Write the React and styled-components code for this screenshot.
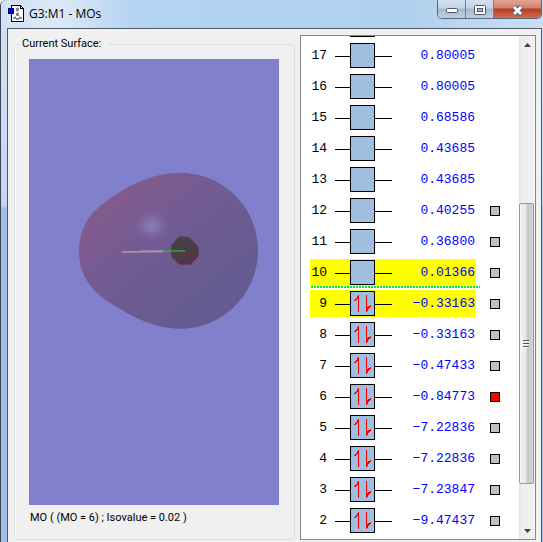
import styled, { createGlobalStyle } from "styled-components";
import { useState } from "react";

const GlobalStyle = createGlobalStyle`
  * {
    box-sizing: border-box;
  }

  body {
    margin: 0;
    overflow: hidden;
    background: #f0f0f0;
    color: #000;
    font-family: Roboto, "Liberation Sans", sans-serif;
    font-size: 11px;
  }
`;

const Window = styled.div`
  height: 100vh;
  display: flex;
  flex-direction: column;
  padding: 0 1px 0 6px;
  border-left: 1px solid #3a4552;
  border-top-left-radius: 6px;
  background: linear-gradient(#d3e3f4, #c3d8ef 206px, #9fc0e8 208px, #9fc0e8);
`;

const TitleBar = styled.header`
  height: 28px;
  flex-shrink: 0;
  display: flex;
  align-items: flex-start;
  margin: 0 -1px 0 -6px;
  padding-left: 7px;
  border-top-left-radius: 6px;
  background: linear-gradient(
    to right,
    #d0e2f4,
    #dce9f6 60px,
    #b5d4f1 130px,
    #b0d0ee 75%,
    #cadef2
  );
`;

const Title = styled.h1`
  flex: 1;
  margin: 0;
  padding: 5px 0 0 4px;
  font-family: "Open Sans", sans-serif;
  font-size: 12px;
  font-weight: 400;
  line-height: 18px;
`;

const AppIcon = styled.svg`
  margin-top: 5px;
`;

const WindowButtons = styled.div`
  display: flex;
  margin-right: 1px;
  border: 1px solid #56687c;
  border-top: 0;
  border-radius: 0 0 5px 5px;
  overflow: hidden;
`;

const WindowButton = styled.button`
  width: ${(props) => (props.$close ? 47 : 28)}px;
  height: 18px;
  display: flex;
  align-items: center;
  justify-content: center;
  padding: 0;
  border: 0;
  border-right: ${(props) => (props.$close ? "0" : "1px solid #6d7f93")};
  background: ${(props) =>
    props.$close
      ? "linear-gradient(#e3a394, #d4806f 8px, #b93a22 9px, #cf6f50)"
      : "linear-gradient(#d4e0ec, #c3d2e2 8px, #a5b9ce 9px, #bdcfe2)"};

  svg {
    margin-top: 2px;
  }
`;

const Content = styled.main`
  flex: 1;
  min-height: 0;
  display: flex;
  gap: 5px;
  padding: 6px 5px 2px 6px;
  border: 1px solid #4d5a69;
  border-bottom: 0;
  background: #f0f0f0;
`;

const Surface = styled.fieldset`
  flex: 1;
  min-width: 0;
  display: flex;
  flex-direction: column;
  margin: 0;
  padding: 6px 15px 13px 14px;
  border: 1px solid #d5dfe5;
  border-radius: 3px;
  box-shadow: inset 1px 0 #fff;
`;

const Legend = styled.legend`
  margin-left: -8px;
  padding: 0 8px 0 1px;
  line-height: 18px;
`;

const Viewport = styled.div`
  flex: 1;
  min-height: 0;
  background: #8080cc;

  svg {
    display: block;
    width: 100%;
    height: 100%;
  }
`;

const Caption = styled.p`
  margin: 0;
  padding: 5px 0 0 1px;
  line-height: 16px;
`;

const Levels = styled.section`
  width: 236px;
  display: flex;
  border: 1px solid #828790;
  background: #fff;
`;

const LevelsView = styled.div`
  flex: 1;
  min-width: 0;
  display: flex;
  flex-direction: column;
  justify-content: flex-end;
  padding: 0 0 3px 9px;
  overflow: hidden;
`;

const Table = styled.table`
  width: 190px;
  border-spacing: 0;
  font-family: "Liberation Mono", "Courier New", monospace;
  font-size: 13px;
  line-height: 15px;
`;

const Cell = styled.td`
  position: relative;
  height: 31px;
  padding: 0;
  border: solid transparent;
  border-width: 2px 0;
  background: ${(props) => (props.$marked ? "#ff0" : "transparent")};
  background-clip: padding-box;
`;

const IdCell = styled(Cell)`
  width: 25px;
  padding-right: 8px;
  text-align: right;
`;

const DiagramCell = styled(Cell)`
  width: 57px;

  svg {
    display: block;
  }
`;

const EnergyCell = styled(Cell)`
  width: 84px;
  padding-right: 1px;
  text-align: right;
  color: #00f;
`;

const CheckCell = styled(Cell)`
  text-align: right;
`;

// dotted line between the empty and the filled levels
const Gap = styled.span`
  position: absolute;
  left: 1px;
  bottom: -2px;
  z-index: 1;
  width: 169px;
  height: 2px;
  background: repeating-linear-gradient(
    to right,
    #00f020 0 2px,
    transparent 2px 3px
  );
`;

const Check = styled.input`
  appearance: none;
  display: block;
  width: 10px;
  height: 10px;
  margin: 0 0 0 auto;
  border: 1px solid #000;
  background: #c0c0c0;

  &:checked {
    background: #f00;
  }
`;

const ScrollBar = styled.div`
  width: 16px;
  display: flex;
  flex-direction: column;
  background: linear-gradient(to right, #e3e3e3, #efefef 3px, #f0f0f0);
`;

const ScrollButton = styled.button`
  height: 17px;
  display: flex;
  align-items: center;
  justify-content: center;
  padding: 0;
  border: 0;
  background: transparent;
`;

const Track = styled.div`
  flex: 1;
  display: grid;
  grid-template-rows: 150fr 280fr 38fr;
`;

const Thumb = styled.div`
  grid-row: 2;
  display: flex;
  align-items: center;
  justify-content: center;
  margin-right: 1px;
  border: 1px solid #979797;
  border-radius: 2px;
  background: linear-gradient(to right, #f6f6f6, #e6e6e8 45%, #c4c4c9 60%, #d6d6d9);
`;

const orbitals = [
  { key: "above" }, // only the lower edge of its box is in view
  { id: 17, energy: "0.80005" },
  { id: 16, energy: "0.80005" },
  { id: 15, energy: "0.68586" },
  { id: 14, energy: "0.43685" },
  { id: 13, energy: "0.43685" },
  { id: 12, energy: "0.40255", hasCheck: true },
  { id: 11, energy: "0.36800", hasCheck: true },
  { id: 10, energy: "0.01366", hasCheck: true, marked: true },
  { id: 9, energy: "−0.33163", hasCheck: true, marked: true },
  { id: 8, energy: "−0.33163", hasCheck: true },
  { id: 7, energy: "−0.47433", hasCheck: true },
  { id: 6, energy: "−0.84773", hasCheck: true },
  { id: 5, energy: "−7.22836", hasCheck: true },
  { id: 4, energy: "−7.22836", hasCheck: true },
  { id: 3, energy: "−7.23847", hasCheck: true },
  { id: 2, energy: "−9.47437", hasCheck: true },
];

const HOMO = 9;

function LevelDiagram({ filled }) {
  return (
    <svg width="57" height="25" shapeRendering="crispEdges" aria-hidden="true">
      <path d="M0 13.5H15M40 13.5H57" stroke="#000" />
      <rect x="15.5" y="0.5" width="24" height="24" fill="#a0bedf" stroke="#000" />
      {filled && (
        <g fill="#f00">
          <path d="M23 4h1v17h-1zM22 5h1v3h-1zM21 7h1v2h-1zM20 8h1v2h-1zM19 9h1v1h-1z" />
          <path d="M31 4h1v17h-1zM32 16h1v4h-1zM33 15h1v3h-1zM34 15h1v2h-1zM35 14h1v2h-1z" />
        </g>
      )}
    </svg>
  );
}

function OrbitalRow({ orbital, checked, onSelect }) {
  const { id, energy, hasCheck, marked } = orbital;

  return (
    <tr>
      <IdCell $marked={marked}>
        {id}
        {id === HOMO + 1 && <Gap />}
      </IdCell>
      <DiagramCell $marked={marked}>
        <LevelDiagram filled={id <= HOMO} />
      </DiagramCell>
      <EnergyCell $marked={marked}>{energy}</EnergyCell>
      <CheckCell>
        {hasCheck && (
          <Check
            type="checkbox"
            aria-label={`MO ${id}`}
            checked={checked}
            onChange={() => onSelect(id)}
          />
        )}
      </CheckCell>
    </tr>
  );
}

function SurfaceView() {
  return (
    <svg viewBox="0 0 250 446" role="img" aria-label="Orbital surface">
      <defs>
        <linearGradient id="lobe" x1="0.1" y1="0.15" x2="0.72" y2="0.8">
          <stop offset="0" stopColor="#855b8d" />
          <stop offset="0.5" stopColor="#715b93" />
          <stop offset="1" stopColor="#655b90" />
        </linearGradient>
        <radialGradient id="shine">
          <stop offset="0" stopColor="#8c80ba" />
          <stop offset="0.4" stopColor="#8576af" stopOpacity="0.7" />
          <stop offset="1" stopColor="#755d96" stopOpacity="0" />
        </radialGradient>
        <linearGradient id="atom" x1="0.2" y1="0" x2="0.6" y2="1">
          <stop offset="0" stopColor="#464548" />
          <stop offset="0.5" stopColor="#493c46" />
          <stop offset="1" stopColor="#533448" />
        </linearGradient>
      </defs>
      <g transform="translate(31 101) scale(0.3333)">
        <path
          d="M57 275C60 190 95 155 150 115C220 66 290 38 360 38C490 38 594 140 594 272C594 400 490 506 360 506C290 506 230 478 165 438C90 395 57 340 57 275Z"
          fill="url(#lobe)"
        />
        <ellipse cx="275" cy="197" rx="60" ry="52" fill="url(#shine)" />
        <path
          d="M358 229L388 232L416 261V289L392 314H358L334 291V255Z"
          fill="url(#atom)"
          stroke="#71405f"
          strokeWidth="2"
        />
        <path d="M243 271H309" stroke="#8c6cab" strokeWidth="3" />
        <path d="M186 276L309 274" stroke="#ad98a7" strokeWidth="5" />
        <path d="M309 273H334" stroke="#419b4d" strokeWidth="6" />
        <path d="M334 273H375" stroke="#3b8c35" strokeWidth="6" />
      </g>
    </svg>
  );
}

function App() {
  const [selected, setSelected] = useState(6);

  return (
    <>
      <GlobalStyle />
      <Window>
        <TitleBar>
          <AppIcon width="17" height="17" shapeRendering="crispEdges" aria-hidden="true">
            <path d="M3.5 0.5H12.5L15.5 3.5V16.5H3.5Z" fill="#fff" stroke="#000" />
            <path d="M12.5 0.5V3.5H15.5" fill="none" stroke="#000" />
            <path d="M9.5 5V9L6.5 13M9.5 9L12.5 13" fill="none" stroke="#aaa" />
            <path d="M8 3h3v3h-3zM8 8h3v3h-3zM5 12h3v2h-3zM8 13h3v2h-3zM11 12h3v2h-3z" fill="#888" />
            <rect x="0.5" y="3.5" width="5" height="5" fill="#00f" stroke="#000070" />
          </AppIcon>
          <Title>G3:M1 - MOs</Title>
          <WindowButtons>
            <WindowButton aria-label="Minimize">
              <svg width="12" height="6">
                <rect x="0.5" y="1.5" width="11" height="4" rx="1" fill="#fff" stroke="#535666" />
              </svg>
            </WindowButton>
            <WindowButton aria-label="Maximize">
              <svg width="12" height="10">
                <rect x="0.5" y="0.5" width="11" height="9" rx="1" fill="#fff" stroke="#535666" />
                <rect x="3.5" y="3.5" width="5" height="3" fill="#a8bdd4" stroke="#535666" />
              </svg>
            </WindowButton>
            <WindowButton $close aria-label="Close">
              <svg width="13" height="11">
                <path d="M3 2L10 9M10 2L3 9" stroke="#535666" strokeWidth="5" />
                <path d="M3 2L10 9M10 2L3 9" stroke="#fff" strokeWidth="3" />
              </svg>
            </WindowButton>
          </WindowButtons>
        </TitleBar>

        <Content>
          <Surface>
            <Legend>Current Surface:</Legend>
            <Viewport>
              <SurfaceView />
            </Viewport>
            <Caption>MO ( (MO = 6) ; Isovalue = 0.02 )</Caption>
          </Surface>

          <Levels>
            <LevelsView>
              <Table>
                <tbody>
                  {orbitals.map((orbital) => (
                    <OrbitalRow
                      key={orbital.id ?? orbital.key}
                      orbital={orbital}
                      checked={orbital.id === selected}
                      onSelect={setSelected}
                    />
                  ))}
                </tbody>
              </Table>
            </LevelsView>
            <ScrollBar>
              <ScrollButton aria-label="Scroll up">
                <svg width="7" height="4">
                  <path d="M0 4L3.5 0L7 4Z" fill="#444" />
                </svg>
              </ScrollButton>
              <Track>
                <Thumb>
                  <svg width="7" height="8" shapeRendering="crispEdges">
                    <path d="M0 0.5H6M0 3.5H6M0 6.5H6" stroke="#555" />
                    <path d="M0 1.5H6M0 4.5H6M0 7.5H6" stroke="#fafafa" />
                  </svg>
                </Thumb>
              </Track>
              <ScrollButton aria-label="Scroll down">
                <svg width="7" height="4">
                  <path d="M0 0L3.5 4L7 0Z" fill="#444" />
                </svg>
              </ScrollButton>
            </ScrollBar>
          </Levels>
        </Content>
      </Window>
    </>
  );
}

export default App;
